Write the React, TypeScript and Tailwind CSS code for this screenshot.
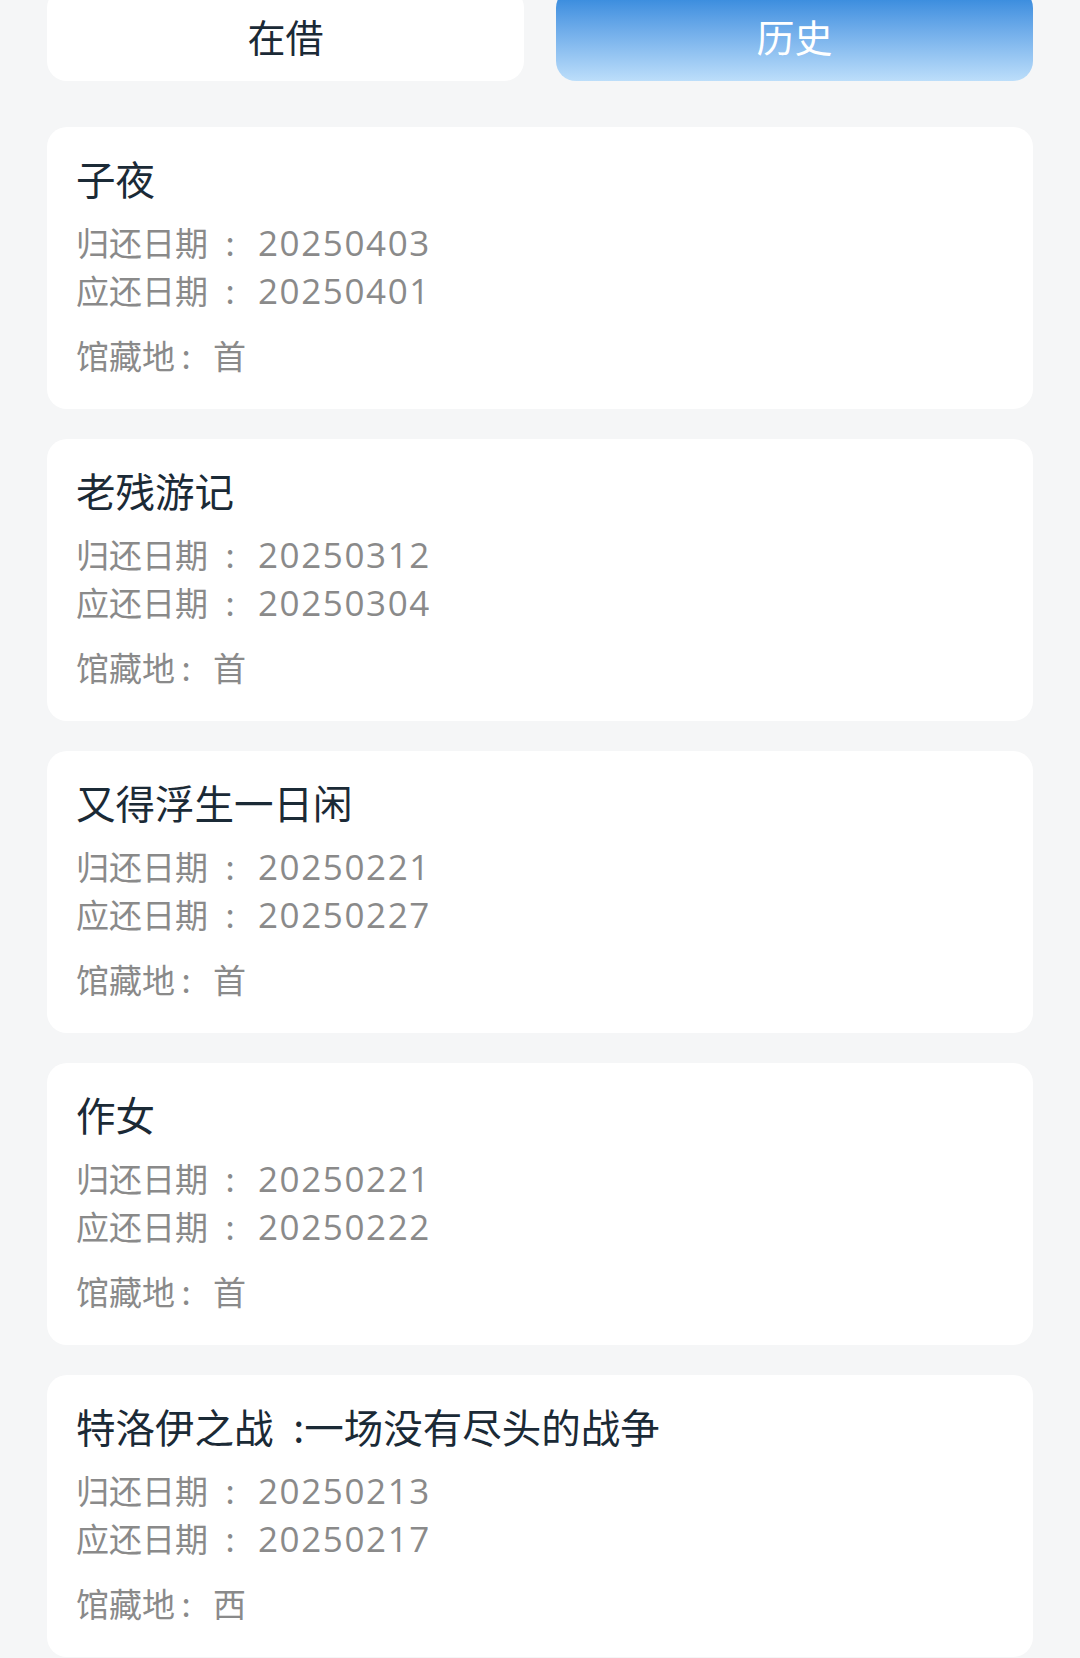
import React from 'react';

type Loan = {
  title: string;
  returned: string;
  due: string;
  location: string;
};

const loans: Loan[] = [
  { title: '子夜', returned: '20250403', due: '20250401', location: '首' },
  { title: '老残游记', returned: '20250312', due: '20250304', location: '首' },
  { title: '又得浮生一日闲', returned: '20250221', due: '20250227', location: '首' },
  { title: '作女', returned: '20250221', due: '20250222', location: '首' },
  { title: '特洛伊之战\u2002:一场没有尽头的战争', returned: '20250213', due: '20250217', location: '西' },
];

const cjk = "font-['Noto_Sans_CJK_SC',sans-serif]";

const DateRow = ({ label, value }: { label: string; value: string }) => (
  <div className="flex h-[48.5px] items-center text-[#8a8a8a]">
    <span className="text-[33px] leading-none">{label}</span>
    <span className="w-[44px] text-center text-[33px] leading-none">:</span>
    <span className="ml-[6px] font-['Open_Sans',sans-serif] text-[35px] leading-none tracking-[1.6px]">{value}</span>
  </div>
);

const LoanCard = ({ loan }: { loan: Loan }) => (
  <div className="flex h-[282px] flex-col rounded-[20px] bg-white pl-[29px] pr-[28px] pt-[27px]">
    <div className="flex h-[48px] items-center whitespace-pre text-[39.5px] leading-none text-[#1b2a36]">{loan.title}</div>
    <div className="mt-[16px]">
      <DateRow label="归还日期" value={loan.returned} />
      <DateRow label="应还日期" value={loan.due} />
    </div>
    <div className="mt-[16px] flex h-[48px] items-center text-[33px] leading-none text-[#8a8a8a]">
      <span>馆藏地</span>
      <span className="w-[22px] text-center">:</span>
      <span className="ml-[16px]">{loan.location}</span>
    </div>
  </div>
);

export default function App() {
  return (
    <div className={`${cjk} min-h-[1658px] w-full overflow-hidden bg-[#f5f6f7] px-[47px]`}>
      <div className="-mt-[12px] flex gap-[32px]">
        <button className="flex h-[93px] flex-1 items-center justify-center rounded-[20px] bg-white pt-[2px] text-[38px] text-[#1b2a36]">
          在借
        </button>
        <button className="flex h-[93px] flex-1 items-center justify-center rounded-[20px] bg-gradient-to-b from-[#2382da] to-[#bcdefa] pt-[2px] text-[38px] text-white">
          历史
        </button>
      </div>
      <div className="mt-[46px] flex flex-col gap-[30px]">
        {loans.map((loan) => (
          <LoanCard key={loan.title} loan={loan} />
        ))}
      </div>
    </div>
  );
}
